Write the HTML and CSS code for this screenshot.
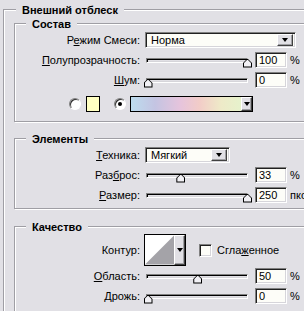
FILE: index.html
```html
<!DOCTYPE html>
<html>
<head>
<meta charset="utf-8">
<link rel="stylesheet" href="styles.css">
</head>
<body>
<div class="group outer">
    <div class="title">Внешний отблеск</div>

    <div class="group sub sostav">
        <div class="title">Состав</div>
        <div class="row">
            <div class="label">Р<u>е</u>жим Смеси:</div>
            <div class="select mode"><span>Норма</span><div class="drop"><i></i></div></div>
        </div>
        <div class="row">
            <div class="label"><u>П</u>олупрозрачность:</div>
            <div class="slider" style="--v: 100"><div class="thumb"></div></div>
            <div class="num">100</div>
            <div class="unit">%</div>
        </div>
        <div class="row">
            <div class="label"><u>Ш</u>ум:</div>
            <div class="slider" style="--v: 0"><div class="thumb"></div></div>
            <div class="num">0</div>
            <div class="unit">%</div>
        </div>
        <div class="swatches">
            <div class="radio"></div>
            <div class="swatch"></div>
            <div class="radio on"></div>
            <div class="gradient"><div class="fill"></div><div class="drop"><i></i></div></div>
        </div>
    </div>

    <div class="group sub elements">
        <div class="title">Элементы</div>
        <div class="row">
            <div class="label"><u>Т</u>ехника:</div>
            <div class="select tech"><span>Мягкий</span><div class="drop"><i></i></div></div>
        </div>
        <div class="row">
            <div class="label">Раз<u>б</u>рос:</div>
            <div class="slider" style="--v: 33"><div class="thumb"></div></div>
            <div class="num">33</div>
            <div class="unit">%</div>
        </div>
        <div class="row">
            <div class="label"><u>Р</u>азмер:</div>
            <div class="slider" style="--v: 100"><div class="thumb"></div></div>
            <div class="num">250</div>
            <div class="unit">пкс</div>
        </div>
    </div>

    <div class="group sub quality">
        <div class="title">Качество</div>
        <div class="row contour-row">
            <div class="label">Контур:</div>
            <div class="contour">
                <svg class="curve" width="29" height="29" viewBox="0 0 29 29"><polygon points="0,29 29,0 29,29" fill="#a4a3a8"/></svg>
                <div class="drop"><i></i></div>
            </div>
            <div class="check"></div>
            <div class="check-label">Сгла<u>ж</u>енное</div>
        </div>
        <div class="row">
            <div class="label"><u>О</u>бласть:</div>
            <div class="slider" style="--v: 50"><div class="thumb"></div></div>
            <div class="num">50</div>
            <div class="unit">%</div>
        </div>
        <div class="row">
            <div class="label"><u>Д</u>рожь:</div>
            <div class="slider" style="--v: 0"><div class="thumb"></div></div>
            <div class="num">0</div>
            <div class="unit">%</div>
        </div>
    </div>
</div>
</body>
</html>
```

FILE: styles.css
```css
body {
    margin: 0;
    width: 304px;
    height: 311px;
    overflow: hidden;
    background: #e1e0e5;
    font-family: "Liberation Sans", Arial, sans-serif;
    font-size: 11px;
    color: #000;
}
u {
    text-decoration-thickness: 1px;
    text-underline-offset: 1px;
}

/* etched group boxes */
.group {
    border: 1px solid #9f9ea4;
    box-shadow: inset 1px 1px 0 #fff, 1px 1px 0 #fff;
}
.title {
    width: fit-content;
    margin: -6px 0 0 11px;
    padding: 0 6px;
    line-height: 12px;
    font-weight: bold;
    background: #e1e0e5;
    white-space: nowrap;
}
.outer {
    width: 360px;
    height: 400px;
    margin: 9px 0 0 3px;
}
.outer > .title {
    margin-left: 12px;
}
.sub {
    margin-left: 10px;
}
.sostav {
    margin-top: 7px;
    padding-bottom: 7px;
}
.elements {
    margin-top: 16px;
    padding-bottom: 3px;
}
.quality {
    margin-top: 17px;
    height: 120px;
}

/* rows */
.row {
    display: flex;
    align-items: center;
    height: 20px;
}
.label {
    width: 125px;
    margin-right: 5px;
    text-align: right;
    white-space: nowrap;
}

/* sunken fields */
.num, .select, .check {
    box-sizing: border-box;
    border: 1px solid;
    border-color: #808080 #fff #fff #808080;
    box-shadow: inset 1px 1px 0 #202020, inset -1px -1px 0 #d6d5da;
    background: #fdfdf8;
}
.num {
    width: 32px;
    height: 16px;
    padding: 1px 0 0 3px;
    line-height: 12px;
}
.unit {
    margin-left: 3px;
    white-space: nowrap;
}

.select {
    display: flex;
    align-items: center;
    height: 16px;
    padding: 2px;
}
.select span {
    flex: 1;
    padding-left: 3px;
    line-height: 12px;
}
.mode {
    width: 151px;
}
.tech {
    width: 85px;
}

/* raised dropdown button */
.drop {
    box-sizing: border-box;
    display: flex;
    align-items: center;
    justify-content: center;
    border: 1px solid;
    border-color: #fff #404040 #404040 #fff;
    box-shadow: inset -1px -1px 0 #a0a0a4;
    background: #e1e0e5;
}
.drop i {
    width: 0;
    height: 0;
    border-left: 3.5px solid transparent;
    border-right: 3.5px solid transparent;
    border-top: 4px solid #000;
}
.select .drop {
    width: 16px;
    height: 12px;
}

/* slider */
.slider {
    position: relative;
    box-sizing: border-box;
    width: 102px;
    height: 5px;
    margin: 0 7px 0 1px;
    border: 1px solid;
    border-color: #808080 #fff #fff #808080;
    box-shadow: inset 1px 1px 0 #000, inset -1px -1px 0 #d6d5da;
    background: #e1e0e5;
}
.thumb {
    position: absolute;
    top: 0;
    left: calc(var(--v) * 0.995px - 3.5px);
    width: 9px;
    height: 9px;
    background: #000;
    clip-path: polygon(50% 0, 100% 50%, 100% 100%, 0 100%, 0 50%);
}
.thumb::after {
    content: "";
    position: absolute;
    inset: 1px;
    background: #f2f1f5;
    clip-path: polygon(50% 0, 100% 50%, 100% 100%, 0 100%, 0 50%);
}

/* color row */
.swatches {
    display: flex;
    align-items: center;
    height: 20px;
    margin-top: 4px;
    padding-left: 54px;
}
.radio {
    position: relative;
    box-sizing: border-box;
    width: 12px;
    height: 12px;
    border-radius: 50%;
    border: 1px solid;
    border-color: #808080 #fff #fff #808080;
    box-shadow: inset 1px 1px 0 #303030;
    background: #fff;
}
.radio.on::after {
    content: "";
    position: absolute;
    left: 3px;
    top: 3px;
    width: 4px;
    height: 4px;
    border-radius: 50%;
    background: #000;
}
.swatch {
    width: 14px;
    height: 16px;
    box-sizing: border-box;
    margin: 0 14px 0 5px;
    border: 1px solid #000;
    background: #ffffc2;
}
.gradient {
    display: flex;
    width: 123px;
    height: 16px;
    box-sizing: border-box;
    margin-left: 4px;
    border: 1px solid #000;
}
.gradient .fill {
    flex: 1;
    background: linear-gradient(90deg, #bcdcee 0%, #c4c4e2 22%, #e6c4dc 45%, #f2ccc8 62%, #eeeac8 82%, #e6f2cc 100%);
}
.gradient .drop {
    width: 11px;
}

/* contour row */
.contour-row {
    height: 32px;
    margin-top: 1px;
}
.contour {
    display: flex;
    box-sizing: border-box;
    width: 42px;
    height: 32px;
    margin-left: -1px;
    border: 1px solid #000;
    background: #fff;
}
.curve {
    display: block;
    flex: 1;
    height: 30px;
}
.contour .drop {
    width: 11px;
}
.check {
    width: 13px;
    height: 13px;
    margin-left: 13px;
}
.check-label {
    margin-left: 5px;
}
```
